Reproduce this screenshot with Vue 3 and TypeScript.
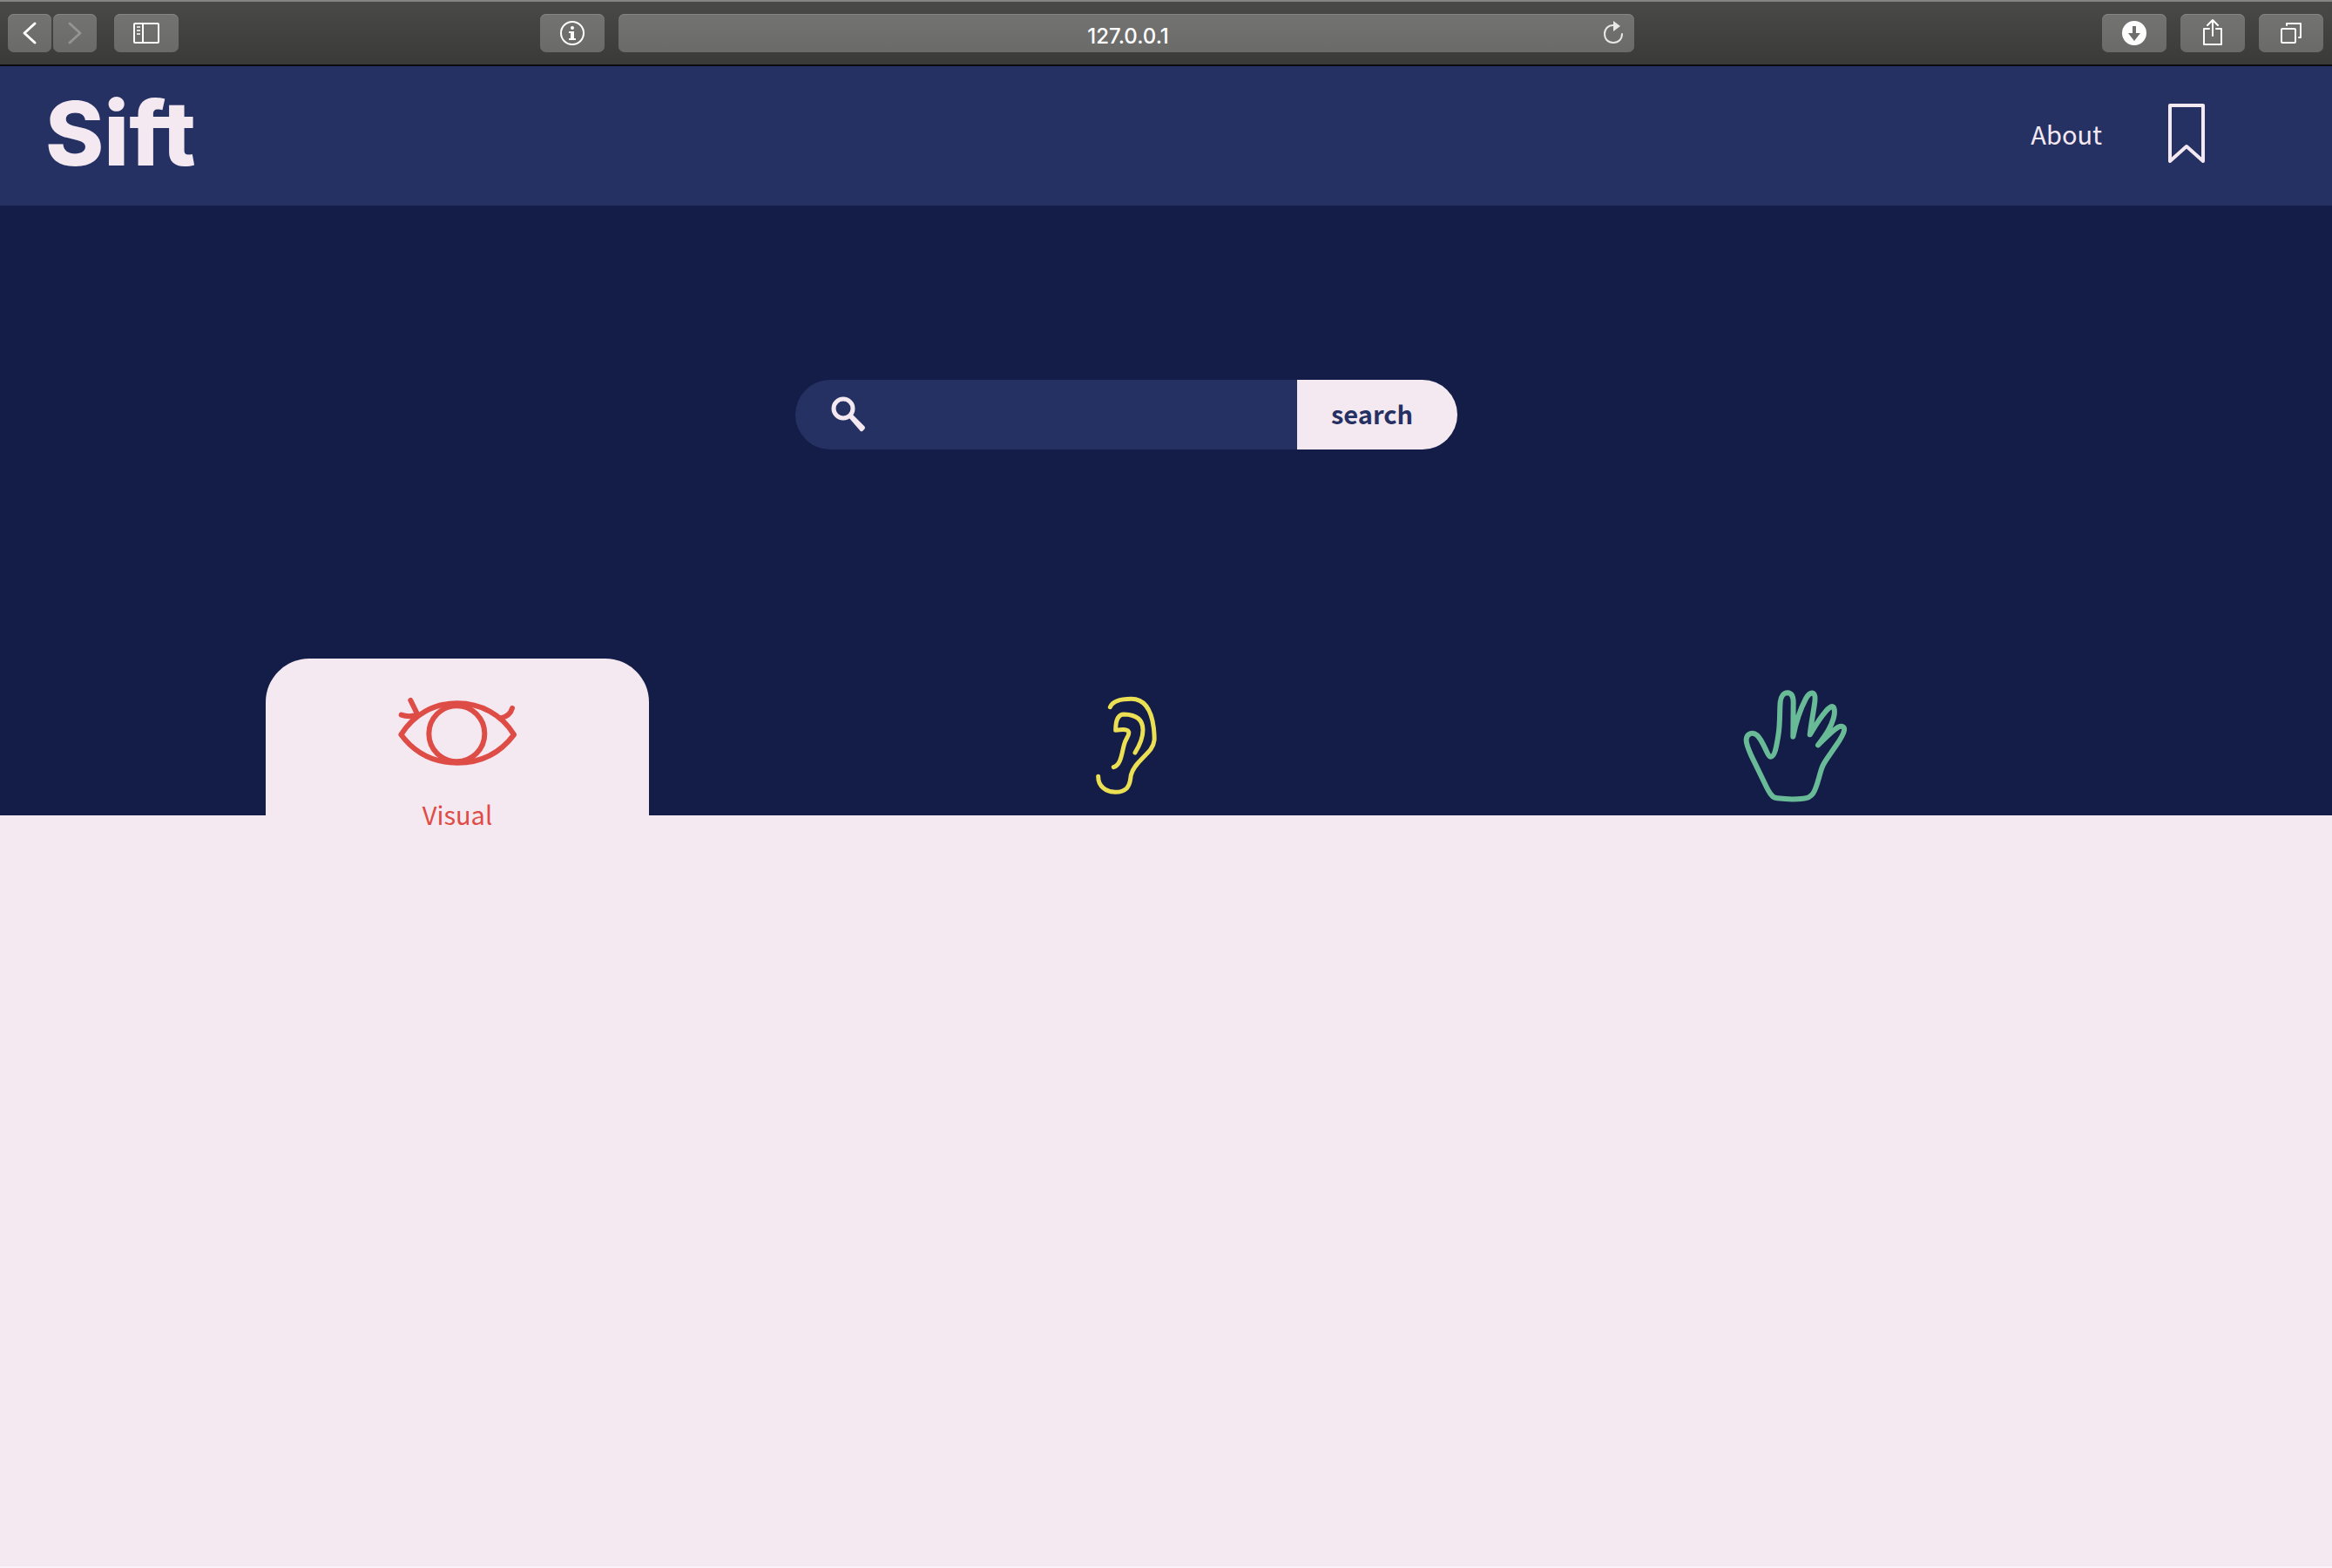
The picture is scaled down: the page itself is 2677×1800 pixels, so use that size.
<script setup lang="ts">
import { ref } from 'vue'

interface Sense {
  id: string
  name: string
  label: string
  stroke: number
  viewBox: string
  paths: string[]
}

const address = ref('127.0.0.1')
const query = ref('')
const active = ref('visual')

const senses: Sense[] = [
  {
    id: 'visual',
    name: 'Visual',
    label: 'Visual',
    stroke: 18,
    viewBox: '495 156 420 390',
    paths: [
      'M511 310C555 240 625 202 704 202C785 202 858 240 900 310C855 370 790 407 705 407C620 407 555 370 511 310Z',
      'M703 211C756 211 799 254 799 307C799 360 756 403 703 403C650 403 607 360 607 307C607 254 650 211 703 211Z',
      'M512 242Q536 251 566 243M544 192L569 243M854 253Q886 247 894 219',
    ],
  },
  {
    id: 'audio',
    name: 'Auditory',
    label: '',
    stroke: 15,
    viewBox: '-21 36 420 390',
    paths: [
      'M133 95C143 73 173 67 206 67C257 67 276 112 283 166C287 205 288 218 273 240C252 268 213 293 205 329C202 344 204 360 190 375C171 393 130 392 110 374C98 365 92 350 92 334',
      'M219 252C235 226 246 200 246 174C246 137 222 121 181 120C159 120 152 143 152 175C175 172 201 169 197 187C195 198 188 203 182 222C173 251 172 293 145 302',
    ],
  },
  {
    id: 'touch',
    name: 'Tactile',
    label: '',
    stroke: 18,
    viewBox: '33 66 420 390',
    paths: [
      'M165 433C153 422 147 407 140 393L91 292C80 268 72 250 74 235C77 214 97 210 111 222C134 243 146 296 158 296C173 296 179 253 184 223C191 180 188 147 191 108C193 87 203 76 216 76C230 77 236 91 236 109L235 227C245 176 261 130 279 96C288 79 295 76 303 77C313 79 312 98 308 121C303 154 296 191 293 220C309 194 326 164 345 143C358 127 372 116 376 129C382 146 372 178 357 204C347 222 333 240 321 256C347 231 372 204 389 195C404 188 413 192 411 205C408 226 386 252 371 275C351 305 342 313 334 335C323 368 317 403 304 422C293 437 283 439 270 440C239 444 206 442 181 439Q171 438 165 433Z',
    ],
  },
]
</script>

<template>
  <div class="page">
    <div class="toolbar">
      <div class="group">
        <div class="pair">
          <button class="tool narrow" aria-label="Back">
            <svg width="50" height="44" viewBox="0 0 50 44"><path d="M31 11L19 22L31 33" stroke-width="3" /></svg>
          </button>
          <button class="tool narrow" aria-label="Forward" disabled>
            <svg width="50" height="44" viewBox="0 0 50 44"><path d="M19 11L31 22L19 33" stroke-width="3" /></svg>
          </button>
        </div>
        <button class="tool" aria-label="Show sidebar">
          <svg width="74" height="44" viewBox="0 0 74 44">
            <rect x="23" y="11" width="28" height="22" rx="1" stroke-width="2" />
            <path d="M33 11V33" stroke-width="2" />
            <path d="M26 15H30M26 19H30M26 23H30" stroke-width="2" stroke-linecap="butt" opacity=".75" />
          </svg>
        </button>
      </div>
      <div class="center">
        <button class="tool" aria-label="Site information">
          <svg width="74" height="44" viewBox="0 0 74 44">
            <circle cx="37" cy="22" r="13" stroke-width="2" />
            <circle cx="37" cy="16" r="2" fill="currentColor" stroke="none" />
            <path d="M33 20H39V28H41V30H33V28H35V22H33Z" fill="currentColor" stroke="none" />
          </svg>
        </button>
        <div class="address">
          <input v-model="address" type="text" aria-label="Address" />
          <button class="reload" aria-label="Reload">
            <svg width="24" height="28" viewBox="0 0 24 28">
              <path d="M12 5C6 5 2 9 2 15C2 21 6 25 12 25C18 25 22 21 22 15" stroke-width="2" />
              <path d="M12 0L20 6L12 12Z" fill="currentColor" stroke="none" />
            </svg>
          </button>
        </div>
      </div>
      <div class="group end">
        <button class="tool" aria-label="Downloads">
          <svg width="74" height="44" viewBox="0 0 74 44">
            <path
              fill="currentColor"
              stroke="none"
              fill-rule="evenodd"
              d="M37 8A14 14 0 0 1 37 36A14 14 0 0 1 37 8ZM35 14V22H30L37 31L44 22H39V14Z"
            />
          </svg>
        </button>
        <button class="tool" aria-label="Share">
          <svg width="74" height="44" viewBox="0 0 74 44">
            <path d="M33 17H27V35H47V17H41M37 25V7M31 13L37 7L43 13" stroke-width="2" />
          </svg>
        </button>
        <button class="tool" aria-label="Show tabs">
          <svg width="74" height="44" viewBox="0 0 74 44">
            <rect x="26" y="17" width="16" height="16" rx="1" stroke-width="2" />
            <path d="M32 13V11H48V27H46" stroke-width="2" />
          </svg>
        </button>
      </div>
    </div>

    <header class="header">
      <a class="logo" href="#">Sift</a>
      <nav class="nav">
        <a href="#about">About</a>
        <a class="bookmark" href="#bookmarks" aria-label="Bookmarks">
          <svg width="42" height="68" viewBox="0 0 42 68">
            <path d="M2 2H40V66L21 49L2 66Z" stroke-width="4" />
          </svg>
        </a>
      </nav>
    </header>

    <section class="hero">
      <form class="search" role="search" @submit.prevent>
        <label class="field">
          <svg width="40" height="42" viewBox="0 0 40 42">
            <circle cx="14" cy="14" r="11" stroke-width="5" />
            <path
              d="M20 24L24 20L38 34Q40 36 38 38L36 40Q34 41 33 39Z"
              fill="currentColor"
              stroke="none"
            />
          </svg>
          <input v-model="query" type="text" aria-label="Search" />
        </label>
        <button class="submit" type="submit">search</button>
      </form>

      <div class="tabs" role="tablist">
        <button
          v-for="sense in senses"
          :key="sense.id"
          class="tab"
          :class="[sense.id, { active: active === sense.id }]"
          type="button"
          role="tab"
          :aria-label="sense.name"
          :aria-selected="active === sense.id"
          @click="active = sense.id"
        >
          <svg width="140" height="130" :viewBox="sense.viewBox">
            <path v-for="d in sense.paths" :key="d" :d="d" :stroke-width="sense.stroke" />
          </svg>
          <span v-if="sense.label">{{ sense.label }}</span>
        </button>
      </div>
    </section>

    <main class="results"></main>
  </div>
</template>

<style>
body {
  margin: 0;
}
</style>

<style scoped>
.page {
  --pink: #f4e8f1;
  --navy: #263163;
  --night: #141d47;
  display: flex;
  flex-direction: column;
  box-sizing: border-box;
  min-height: 100vh;
  border-bottom: 2px solid #f9f2f7;
  color: var(--pink);
  font-family: 'Noto Sans CJK JP', 'Noto Sans', sans-serif;
  font-size: 29px;
}

button,
input {
  margin: 0;
  padding: 0;
  border: 0;
  background: none;
  color: inherit;
  font: inherit;
}

button {
  cursor: pointer;
}

a {
  color: inherit;
  text-decoration: none;
}

svg {
  display: block;
  flex: none;
  fill: none;
  stroke: currentColor;
  stroke-linecap: round;
  stroke-linejoin: round;
}

.toolbar {
  display: grid;
  grid-template-columns: 611fr 1256fr 791fr;
  align-items: center;
  box-sizing: border-box;
  height: 76px;
  padding: 0 10px 0 9px;
  border-top: 2px solid #858584;
  border-bottom: 2px solid #0a0a10;
  background: linear-gradient(#494947, #3a3a39);
  color: #fff;
}

.group {
  display: flex;
  gap: 20px;
}

.end {
  justify-content: flex-end;
  gap: 16px;
}

.pair {
  display: flex;
  gap: 2px;
}

.tool,
.address {
  height: 44px;
  border-radius: 7px;
  background: linear-gradient(#737372, #6a6a69);
  box-shadow: inset 0 1px #858584;
}

.tool {
  flex: none;
  width: 74px;
}

.narrow {
  width: 50px;
}

.tool:disabled {
  color: #949493;
}

.center {
  display: flex;
  gap: 16px;
}

.address {
  position: relative;
  flex: 1;
}

.address input {
  box-sizing: border-box;
  width: 100%;
  height: 44px;
  padding-left: 4px;
  font-family: Inter, sans-serif;
  font-size: 24px;
  font-weight: 500;
  text-align: center;
}

.reload {
  position: absolute;
  top: 8px;
  right: 12px;
  color: #e8e8e8;
}

.header {
  display: flex;
  align-items: center;
  justify-content: space-between;
  box-sizing: border-box;
  height: 160px;
  padding: 0 146px 6px 52px;
  background: var(--navy);
}

.logo {
  font-family: Inter, sans-serif;
  font-size: 102px;
  font-weight: 800;
  font-variant-ligatures: none;
  line-height: 120px;
}

.nav {
  display: flex;
  align-items: center;
  gap: 76px;
}

/* Stacked above the results so the active tab's label can hang over the edge. */
.hero {
  position: relative;
  z-index: 1;
  display: flex;
  flex-direction: column;
  justify-content: space-between;
  box-sizing: border-box;
  height: 700px;
  padding: 200px 91px 0 0;
  background: var(--night);
}

.search {
  display: flex;
  align-self: center;
  width: 760px;
  height: 80px;
  border-radius: 40px;
  overflow: hidden;
}

.field {
  display: flex;
  flex: 1;
  align-items: center;
  gap: 20px;
  padding: 0 20px 0 41px;
  background: var(--navy);
}

.field input {
  flex: 1;
  min-width: 0;
  height: 80px;
}

.field input:focus {
  outline: none;
}

.submit {
  width: 184px;
  padding-bottom: 4px;
  padding-right: 12px;
  background: var(--pink);
  color: var(--navy);
  font-weight: 700;
}

.tabs {
  display: grid;
  grid-template-columns: repeat(3, 1fr);
  justify-items: center;
  height: 180px;
  padding: 0 141px;
}

.tab {
  display: flex;
  flex-direction: column;
  align-items: center;
  box-sizing: border-box;
  width: 440px;
  height: 180px;
  padding-top: 36px;
  border-radius: 50px 50px 0 0;
  line-height: 24px;
}

.active {
  background: var(--pink);
}

.visual {
  color: #de4c46;
}

.audio {
  color: #ebdf54;
}

.touch {
  color: #69bb97;
}

.results {
  flex: 1;
  background: var(--pink);
}
</style>
